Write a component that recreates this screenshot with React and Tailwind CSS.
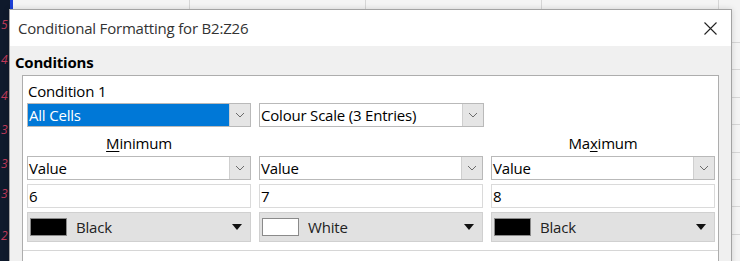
import React from "react";

const font = { fontFamily: '"Open Sans", "Noto Sans", sans-serif', letterSpacing: "-0.2px" };

function Chevron() {
  return (
    <svg width="10" height="6" viewBox="0 0 10 6" className="block">
      <path d="M1 1 L5 5 L9 1" fill="none" stroke="#6b6b6b" strokeWidth="1" />
    </svg>
  );
}

function Select({ text, selected }) {
  return (
    <div className="flex h-[24px] border border-[#b9b9b9] bg-white">
      <div
        className={
          "flex-1 flex items-center pl-[1px] pt-[1px] text-[15px] leading-none " +
          (selected ? "bg-[#0078d7] text-white" : "text-black")
        }
      >
        {text}
      </div>
      <div className="w-[21px] flex items-center justify-center bg-[#e5e5e5] border-l border-[#cfcfcf]">
        <Chevron />
      </div>
    </div>
  );
}

function Input({ text }) {
  return (
    <div className="flex items-center h-[24px] border border-[#dadada] bg-white pl-[1px] pt-[1px] text-[15px] leading-none text-black">
      {text}
    </div>
  );
}

function ColourBtn({ colour, label }) {
  return (
    <div className="flex items-center h-[30px] border border-[#d0d0d0] bg-[#e1e1e1] pl-[2px] pr-[8px]">
      <div
        className="w-[37px] h-[18px] border border-[#8a8a8a]"
        style={{ background: colour }}
      />
      <div className="flex-1 pl-[9px] pt-[1px] text-[15px] leading-none text-[#222]">{label}</div>
      <svg width="10" height="6" viewBox="0 0 10 6" className="block">
        <path d="M0 0 L10 0 L5 6 Z" fill="#111" />
      </svg>
    </div>
  );
}

const rows = [0, 1, 2, 3, 4, 5, 6, 7];
const marks = [
  { t: 19, v: "5" },
  { t: 54, v: "4" },
  { t: 90, v: "4" },
  { t: 124, v: "3" },
  { t: 158, v: "3" },
  { t: 188, v: "3" },
  { t: 230, v: "2" },
];

export default function App() {
  return (
    <div className="relative w-[740px] h-[261px] overflow-hidden bg-[#f4f4f4]" style={font}>
      {/* spreadsheet background */}
      <div className="flex h-full">
        <div className="relative w-[10px] h-full bg-[#0f1a2c]">
          {marks.map((m, i) => (
            <div
              key={i}
              className="absolute left-[1px] text-[12px] leading-none text-[#c23a5a] italic"
              style={{ top: m.t }}
            >
              {m.v}
            </div>
          ))}
        </div>
        <div className="w-[3px] h-[10px] bg-[#1d3fd6]" />
        <div className="flex-1 flex">
          <div className="w-[177px] border-r border-[#d6d6d6]" />
          <div className="w-[176px] border-r border-[#d6d6d6]" />
          <div className="w-[176px] border-r border-[#d6d6d6]" />
          <div className="w-[177px] border-r border-[#d6d6d6]" />
          <div className="flex-1 flex flex-col pt-[42px]">
            {rows.map((r) => (
              <div key={r} className="h-[34px] border-t border-[#d6d6d6]" />
            ))}
          </div>
        </div>
      </div>

      {/* dialog window */}
      <div className="absolute left-[9px] top-[9px] w-[723px] h-[280px] border border-[#a3a3a3] bg-[#f0f0f0] shadow-[0_0_6px_rgba(0,0,0,0.15)] flex flex-col">
        <div className="h-[36px] bg-white flex items-center justify-between pl-[8px] pr-[14px]">
          <div className="text-[15px] text-[#333] leading-none">Conditional Formatting for B2:Z26</div>
          <svg width="13" height="13" viewBox="0 0 13 13" className="block">
            <path d="M0.5 0.5 L12.5 12.5 M12.5 0.5 L0.5 12.5" stroke="#222" strokeWidth="1.1" />
          </svg>
        </div>
        <div className="flex flex-col pl-[5px] pt-[6px]">
          <div className="text-[15px] font-bold leading-[20px] text-black">Conditions</div>
          <div className="ml-[7px] mt-[3px] w-[697px] h-[200px] border border-[#adadad] bg-white flex flex-col pl-[4px] pt-[5px]">
            <div className="text-[15px] leading-[20px] text-black pl-[1px]">Condition 1</div>
            <div className="mt-[2px] flex gap-[8px]">
              <div className="w-[224px]"><Select text="All Cells" selected /></div>
              <div className="w-[225px]"><Select text="Colour Scale (3 Entries)" /></div>
            </div>
            <div className="mt-[6px] grid grid-cols-[224px_224px_224px] gap-x-[8px] gap-y-[4px]">
              <div className="text-center text-[15px] leading-[20px] text-black"><span className="underline underline-offset-2">M</span>inimum</div>
              <div />
              <div className="text-center text-[15px] leading-[20px] text-black">Ma<span className="underline underline-offset-2">x</span>imum</div>
              <div className="-mt-[1px]"><Select text="Value" /></div>
              <div className="-mt-[1px]"><Select text="Value" /></div>
              <div className="-mt-[1px]"><Select text="Value" /></div>
              <Input text="6" />
              <Input text="7" />
              <Input text="8" />
              <ColourBtn colour="#000" label="Black" />
              <ColourBtn colour="#fff" label="White" />
              <ColourBtn colour="#000" label="Black" />
            </div>
            <div className="mt-[8px] -ml-[4px] border-t border-[#d6d6d6]" />
          </div>
        </div>
      </div>
    </div>
  );
}
